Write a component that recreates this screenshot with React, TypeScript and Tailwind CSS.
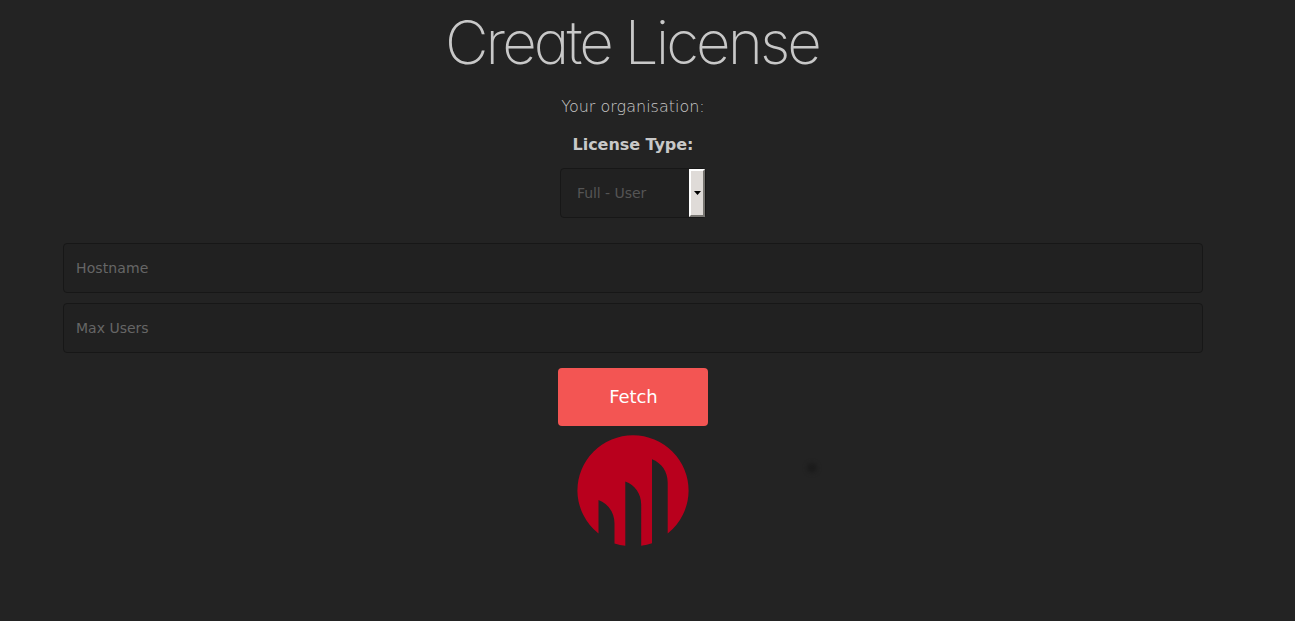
import { useState } from 'react'

function Logo() {
  return (
    <svg viewBox="0 0 112 112" className="w-28 h-28" aria-hidden="true">
      <path
        fill="#b9001d"
        d="M56 .2A55.600 55.600 0 0 0 .4 55.800A55.600 55.600 0 0 0 21.500 98.600V65.100C31 69 37.500 77 37.500 88.500V108.500Q43 110.300 48.300 110.700V46.400C58 50 64.200 58.500 64.200 69.500V110.700Q70 110 75 108.300V24.300C84.500 28 90.700 36.500 90.700 47.500V98.600A55.600 55.600 0 0 0 111.600 55.800A55.600 55.600 0 0 0 56 .2Z"
      />
    </svg>
  )
}

export default function App() {
  const [hostname, setHostname] = useState('')
  const [maxUsers, setMaxUsers] = useState('')

  const fields = [
    { label: 'Hostname', value: hostname, onChange: setHostname, spacing: 'tracking-[0.1px]' },
    { label: 'Max Users', value: maxUsers, onChange: setMaxUsers, spacing: 'tracking-normal' }
  ]

  return (
    <main className="relative h-[621px] overflow-hidden bg-[#232323] pr-[29px] font-['DejaVu_Sans',sans-serif] text-[#c8c8c8]">
      <form className="mx-auto flex w-[1140px] flex-col items-center" onSubmit={(e) => e.preventDefault()}>
        <h1 className="mt-[7px] h-[70px] whitespace-nowrap pr-0.5 font-['Inter',sans-serif] text-[60px] font-[160] leading-[70px] tracking-[-2.93px] [font-feature-settings:'cv11']">
          Create License
        </h1>

        <p className="mt-[18px] h-6 text-base font-extralight leading-6">Your organisation:</p>
        <label htmlFor="type" className="mt-3.5 h-6 text-base font-bold leading-6 tracking-[-0.05px]">License Type:</label>

        <button
          id="type"
          type="button"
          className="mt-[11px] flex h-[50px] w-[146px] rounded border border-[#171717] bg-[#212121] text-left text-sm text-[#555]"
        >
          <span className="flex-1 pl-4 leading-[48px] tracking-[-0.06px]">Full - User</span>
          <span className="flex h-12 w-4 items-center justify-center border-2 border-b-[#777571] border-l-white border-r-[#777571] border-t-white bg-[#dfdbd8]">
            <svg viewBox="0 0 7 4" className="h-1 w-[7px] shrink-0" fill="#000">
              <path d="M0 0h7L3.500 4Z" />
            </svg>
          </span>
        </button>

        <div className="mt-[25px] flex w-full flex-col gap-2.5">
          {fields.map((field) => (
            <input
              key={field.label}
              value={field.value}
              onChange={(e) => field.onChange(e.target.value)}
              placeholder={field.label}
              className={`h-[50px] w-full rounded border border-[#171717] bg-[#212121] px-3 text-sm text-[#c8c8c8] outline-none placeholder:text-[#666] ${field.spacing}`}
            />
          ))}
        </div>

        <button type="submit" className="mt-[15px] h-[58px] w-[150px] rounded bg-[#f35553] pl-px text-lg tracking-[-0.1px] text-white">
          Fetch
        </button>

        <div className="mt-[9px]">
          <Logo />
        </div>
      </form>

      <span className="absolute left-[807px] top-[463px] h-2.5 w-2.5 rounded-full bg-[#1b1b1b] blur-[2px]" />
    </main>
  )
}
